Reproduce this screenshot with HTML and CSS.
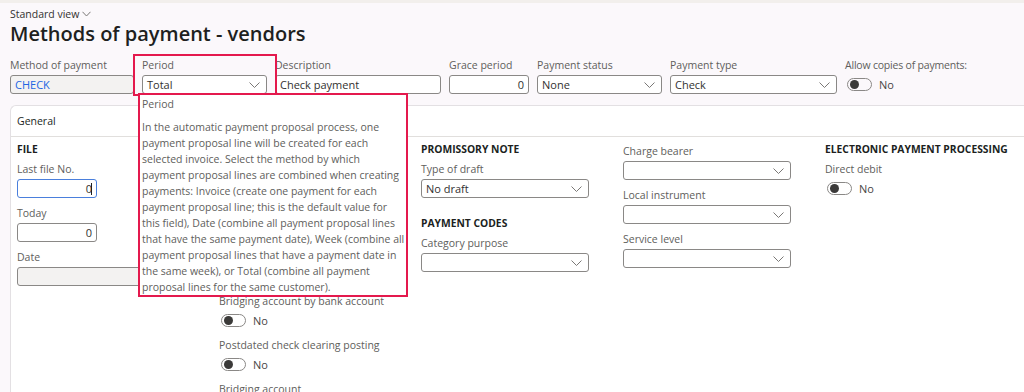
FILE: index.html
```html
<!DOCTYPE html>
<html lang="en">
<head>
    <meta charset="UTF-8">
    <title>Methods of payment - vendors</title>
    <link rel="stylesheet" href="styles.css">
</head>
<body>
    <header class="page-header">
        <div class="view-switch">Standard view
            <svg class="chev-small" width="9" height="6" viewBox="0 0 9 6"><polyline points="0.5,0.8 4.5,5 8.5,0.8"/></svg>
        </div>
        <h1>Methods of payment - vendors</h1>

        <div class="header-fields">
            <div class="field w-method">
                <label>Method of payment</label>
                <div class="input readonly link">CHECK</div>
            </div>
            <div class="field w-period highlighted">
                <label>Period</label>
                <div class="input select">Total
                    <svg class="chev" width="11" height="6" viewBox="0 0 11 6"><polyline points="0.5,0.5 5.5,5.5 10.5,0.5"/></svg>
                </div>
                <div class="tooltip">
                    <div class="tooltip-title">Period</div>
                    <p>In the automatic payment proposal process, one<br>
                    payment proposal line will be created for each<br>
                    selected invoice. Select the method by which<br>
                    payment proposal lines are combined when creating<br>
                    payments: Invoice (create one payment for each<br>
                    payment proposal line; this is the default value for<br>
                    this field), Date (combine all payment proposal lines<br>
                    that have the same payment date), Week (combine all<br>
                    payment proposal lines that have a payment date in<br>
                    the same week), or Total (combine all payment<br>
                    proposal lines for the same customer).</p>
                </div>
            </div>
            <div class="field w-desc">
                <label>Description</label>
                <div class="input">Check payment</div>
            </div>
            <div class="field w-grace">
                <label>Grace period</label>
                <div class="input number">0</div>
            </div>
            <div class="field w-status">
                <label>Payment status</label>
                <div class="input select">None
                    <svg class="chev" width="11" height="6" viewBox="0 0 11 6"><polyline points="0.5,0.5 5.5,5.5 10.5,0.5"/></svg>
                </div>
            </div>
            <div class="field w-type">
                <label>Payment type</label>
                <div class="input select">Check
                    <svg class="chev" width="11" height="6" viewBox="0 0 11 6"><polyline points="0.5,0.5 5.5,5.5 10.5,0.5"/></svg>
                </div>
            </div>
            <div class="field">
                <label class="tight">Allow copies of payments:</label>
                <div class="toggle-row"><span class="toggle"></span>No</div>
            </div>
        </div>
    </header>

    <section class="card">
        <div class="tab-header">General</div>
        <div class="tab-body">
            <!-- file -->
            <div class="column">
                <h3>File</h3>
                <div class="field">
                    <label>Last file No.</label>
                    <div class="input number focused small">0<span class="caret"></span></div>
                </div>
                <div class="field">
                    <label>Today</label>
                    <div class="input number small">0</div>
                </div>
                <div class="field">
                    <label>Date</label>
                    <div class="input readonly wide"></div>
                </div>
            </div>

            <!-- posting: the upper part sits under the tooltip -->
            <div class="column">
                <div class="covered"></div>
                <div class="field">
                    <label>Bridging account by bank account</label>
                    <div class="toggle-row"><span class="toggle"></span>No</div>
                </div>
                <div class="field">
                    <label>Postdated check clearing posting</label>
                    <div class="toggle-row"><span class="toggle"></span>No</div>
                </div>
                <div class="field">
                    <label>Bridging account</label>
                    <div class="input wide"></div>
                </div>
            </div>

            <!-- promissory note / payment codes -->
            <div class="column">
                <h3>Promissory note</h3>
                <div class="field">
                    <label>Type of draft</label>
                    <div class="input select wide">No draft
                        <svg class="chev" width="11" height="6" viewBox="0 0 11 6"><polyline points="0.5,0.5 5.5,5.5 10.5,0.5"/></svg>
                    </div>
                </div>
                <h3 class="section-gap">Payment codes</h3>
                <div class="field">
                    <label>Category purpose</label>
                    <div class="input select wide">
                        <svg class="chev" width="11" height="6" viewBox="0 0 11 6"><polyline points="0.5,0.5 5.5,5.5 10.5,0.5"/></svg>
                    </div>
                </div>
            </div>

            <div class="column offset">
                <div class="field">
                    <label>Charge bearer</label>
                    <div class="input select wide">
                        <svg class="chev" width="11" height="6" viewBox="0 0 11 6"><polyline points="0.5,0.5 5.5,5.5 10.5,0.5"/></svg>
                    </div>
                </div>
                <div class="field">
                    <label>Local instrument</label>
                    <div class="input select wide">
                        <svg class="chev" width="11" height="6" viewBox="0 0 11 6"><polyline points="0.5,0.5 5.5,5.5 10.5,0.5"/></svg>
                    </div>
                </div>
                <div class="field">
                    <label>Service level</label>
                    <div class="input select wide">
                        <svg class="chev" width="11" height="6" viewBox="0 0 11 6"><polyline points="0.5,0.5 5.5,5.5 10.5,0.5"/></svg>
                    </div>
                </div>
            </div>

            <div class="column">
                <h3>Electronic payment processing</h3>
                <div class="field">
                    <label>Direct debit</label>
                    <div class="toggle-row"><span class="toggle"></span>No</div>
                </div>
            </div>
        </div>
    </section>
</body>
</html>
```

FILE: styles.css
```css
/* Reset */
* {
    margin: 0;
    padding: 0;
    box-sizing: border-box;
}
html {
    overflow: hidden;
}
body {
    font-family: 'Open Sans', sans-serif;
    font-size: 10.5px;
    color: #323130;
    background: #fbf8fb;
    border-top: 3px solid #f2efec;
    height: 392px;
    overflow: hidden;
}
.page-header {
    padding: 4px 0 0 10px;
}
.view-switch {
    display: flex;
    align-items: center;
    gap: 3px;
    line-height: 14px;
    color: #323130;
}
.chev-small polyline,
.chev polyline {
    fill: none;
    stroke: #7a7876;
    stroke-width: 1;
}
.chev {
    margin-left: auto;
    flex-shrink: 0;
}
h1 {
    font-size: 20px;
    font-weight: 600;
    line-height: 26px;
    color: #201f1e;
}
.header-fields {
    display: flex;
    gap: 8px;
    margin-top: 10px;
}
.field label {
    display: block;
    line-height: 17px;
    margin-bottom: 1px;
    color: #605e5c;
    white-space: nowrap;
}
.field label.tight {
    letter-spacing: -0.2px;
}
.input {
    height: 19px;
    border: 1px solid #8a8886;
    border-radius: 3px;
    background: #fff;
    font-size: 11px;
    line-height: 17px;
    padding: 0 4px;
    display: flex;
    align-items: center;
    color: #323130;
    white-space: nowrap;
}
.input.select {
    padding-right: 6px;
}
.input.number {
    justify-content: flex-end;
}
.input.readonly {
    background: #f3f2f1;
}
.input.link {
    color: #2266e3;
}
.input.focused {
    border-color: #4a7fdc;
}
.caret {
    display: inline-block;
    width: 1px;
    height: 12px;
    background: #201f1e;
    margin-left: -1px;
}
.w-method { width: 124px; }
.w-period { width: 125px; }
.w-desc { width: 166px; }
.w-grace { width: 80px; }
.w-status { width: 125px; }
.w-type { width: 167px; }
.input.small { width: 80px; }
.input.wide { width: 168px; }

/* highlight round the Period field */
.highlighted {
    position: relative;
    z-index: 10;
}
.highlighted::after {
    content: "";
    position: absolute;
    top: -3px;
    left: -9px;
    right: -10px;
    bottom: -2px;
    border: 2px solid #e4194d;
}
.tooltip {
    position: absolute;
    top: 36px;
    left: -4px;
    width: 270px;
    background: #fff;
    border: 2px solid #e4194d;
    padding: 1px 2px 0;
    color: #605e5c;
    font-size: 10.5px;
    line-height: 16px;
    z-index: 11;
}
.tooltip p {
    margin-top: 7px;
    white-space: nowrap;
}

/* toggles */
.toggle-row {
    height: 19px;
    display: flex;
    align-items: center;
    gap: 7px;
    padding-left: 2px;
    font-size: 11px;
    color: #484644;
}
.toggle {
    position: relative;
    width: 25px;
    height: 13px;
    border: 1px solid #8a8886;
    border-radius: 7px;
}
.toggle::before {
    content: "";
    position: absolute;
    top: 1px;
    left: 2px;
    width: 9px;
    height: 9px;
    border-radius: 50%;
    background: #3b3a39;
}

/* card */
.card {
    margin: 11px 0 0 10px;
    background: #fff;
    border-top: 1px solid #e3e0e3;
    border-left: 1px solid #e3e0e3;
    border-radius: 6px 0 0 0;
    height: 287px;
    overflow: hidden;
}
.tab-header {
    height: 31px;
    line-height: 30px;
    padding-left: 6px;
    border-bottom: 1px solid #e1dfdd;
    color: #201f1e;
}
.tab-body {
    display: grid;
    grid-template-columns: repeat(5, 202px);
    padding: 4px 0 0 6px;
}
.column h3 {
    font-size: 10.3px;
    font-weight: 700;
    line-height: 16px;
    text-transform: uppercase;
    color: #201f1e;
    margin-bottom: 4px;
    white-space: nowrap;
}
.column h3.section-gap {
    margin-top: 17px;
}
.column .field {
    margin-bottom: 7px;
}
.column.offset {
    padding-top: 2px;
}
.covered {
    height: 152px;
}
```
